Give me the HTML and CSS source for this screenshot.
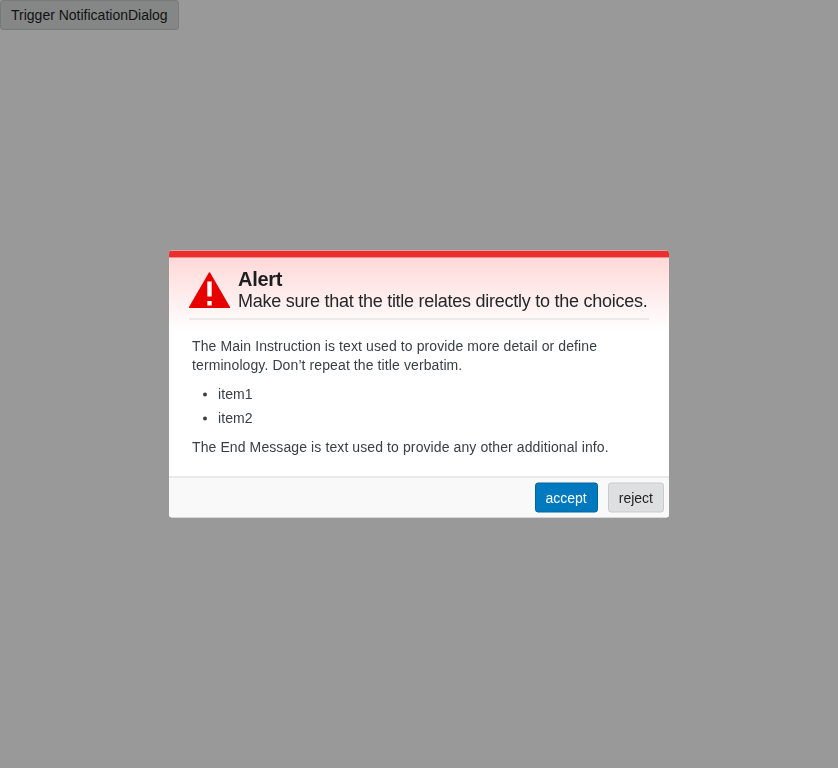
FILE: index.html
```html
<!DOCTYPE html>
<html lang="en">
<head>
<meta charset="utf-8">
<title>Notification Dialog</title>
<link rel="stylesheet" href="styles.css">
</head>
<body>
<button class="button">Trigger NotificationDialog</button>
<div class="overlay">
  <section class="dialog" role="dialog">
    <header class="header">
      <div class="heading">
        <svg class="icon" viewBox="0 0 41 37"><path d="M19.8 1.3Q20.5 .3 21.2 1.3L41 35.5V36.5H0V35.5Z" fill="#e60000"/><path d="M18.3 10h4.4v15h-4.4zM18.3 29.5h4.4v4.5h-4.4z" fill="#fff"/></svg>
        <div>
          <h1 class="title">Alert</h1>
          <h2 class="subtitle">Make sure that the title relates directly to the choices.</h2>
        </div>
      </div>
    </header>
    <div class="content">
      <p>The Main Instruction is text used to provide more detail or define terminology. Don’t repeat the title verbatim.</p>
      <ul><li>item1</li><li>item2</li></ul>
      <p>The End Message is text used to provide any other additional info.</p>
    </div>
    <footer class="footer">
      <button class="button primary">accept</button>
      <button class="button">reject</button>
    </footer>
  </section>
</div>
</body>
</html>
```
FILE: styles.css
```css
* { box-sizing: border-box; }
body { margin: 0; font: 14px/19px "Liberation Sans", Arial, sans-serif; color: #383f44; }
.button { display: block; height: 30px; margin: 0; padding: 0 10px; border: 1px solid #c8cacb; border-radius: 3px; background: #dedfe0; color: #1c1f21; font: 14px/28px "Liberation Sans", Arial, sans-serif; }
.primary { background: #0079bf; border-color: #0065a3; color: #fff; }
.overlay { position: fixed; inset: 0; display: flex; align-items: flex-start; justify-content: center; padding-top: 50vh; background: rgba(0,0,0,.4); }
.dialog { width: 500px; height: 267px; display: flex; flex-direction: column; border-radius: 3px; overflow: hidden; background: #fff; transform: translateY(-50%); }
.header { height: 80px; border-top: 7px solid #eb2f2f; padding: 10px 20px 0; background: linear-gradient(#ffd8d8, #fff); }
.heading { display: flex; height: 52px; border-bottom: 1px solid #d8dadb; color: #25282a; }
.icon { width: 41px; height: 37px; margin: 4px 8px 0 0; flex: none; }
.title { margin: 0; font-size: 20px; line-height: 22px; letter-spacing: -.26px; color: #1c1f21; }
.subtitle { margin: 0; font-size: 18px; line-height: 22px; font-weight: 400; white-space: nowrap; letter-spacing: -.26px; }
.content { flex: 1; padding: 6px 23px 0; letter-spacing: .1px; }
.content p { margin: 0; }
.content ul { margin: 7px 0 8px; padding-left: 26px; line-height: 24px; }
.footer { height: 41px; display: flex; justify-content: flex-end; gap: 10px; padding: 5px 5px 0; border-top: 1px solid #d8dadb; background: #f9f9f9; }
```
